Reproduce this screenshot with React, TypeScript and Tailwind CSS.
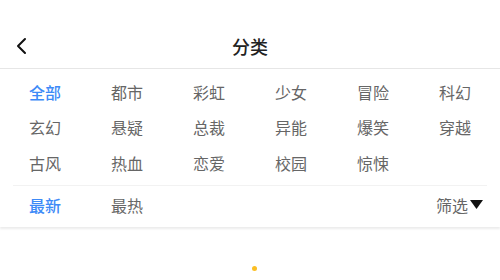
import React from "react";

const cats = [
  "全部", "都市", "彩虹", "少女", "冒险", "科幻",
  "玄幻", "悬疑", "总裁", "异能", "爆笑", "穿越",
  "古风", "热血", "恋爱", "校园", "惊悚",
];

export default function App() {
  return (
    <div
      className="w-[500px] h-[280px] bg-white relative overflow-hidden"
      style={{ fontFamily: '"Noto Sans CJK SC", "Noto Sans", sans-serif' }}
    >
      <div className="h-[68px] flex items-end">
        <div className="h-[44px] w-full flex items-center relative">
          <svg className="absolute left-[14px] top-[13px]" width="16" height="18" viewBox="0 0 16 18">
            <path d="M11 2 L4 9 L11 16" fill="none" stroke="#111" strokeWidth="2" strokeLinecap="round" strokeLinejoin="round" />
          </svg>
          <div className="flex-1 text-center text-[18px] font-medium text-[#222] leading-none">分类</div>
        </div>
      </div>
      <div className="border-t border-[#e6e6e6] shadow-[0_2px_2px_rgba(0,0,0,0.08)]">
        <div className="grid grid-cols-6 px-[4px] pt-[5px]">
          {cats.map((c, i) => (
            <div
              key={c}
              className={`h-[35.5px] flex items-center justify-center text-[16px] leading-none ${i === 0 ? "text-[#3d8af7] font-medium" : "text-[#666]"}`}
            >
              {c}
            </div>
          ))}
        </div>
        <div className="mx-[13px] mt-[4px] border-t border-[#f2f2f2]" />
        <div className="h-[41px] pb-[3px] flex items-center px-[4px] text-[16px] leading-none">
          <div className="w-[82px] text-center text-[#3d8af7] font-medium">最新</div>
          <div className="w-[82px] text-center text-[#666]">最热</div>
          <div className="flex-1" />
          <div className="flex items-center gap-[2px] pr-[13px] text-[#666]">
            筛选
            <svg width="13" height="9" viewBox="0 0 13 9">
              <path d="M0 0 L13 0 L6.5 9 Z" fill="#111" />
            </svg>
          </div>
        </div>
      </div>
      <div className="absolute left-[252px] top-[266px] w-[5px] h-[5px] rounded-full bg-[#fbbf24]" />
    </div>
  );
}
